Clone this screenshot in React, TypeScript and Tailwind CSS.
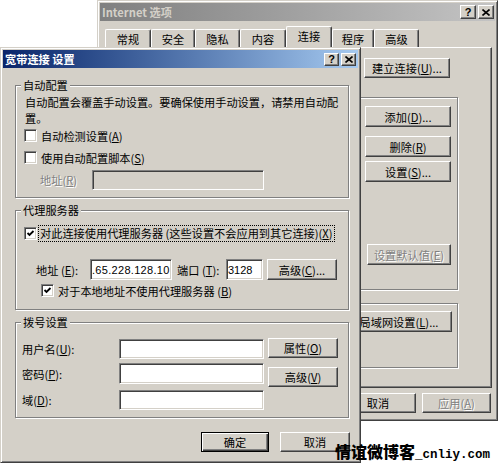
import React from "react";

const raised =
  "bg-[#d4d0c8] border border-t-white border-l-white border-r-[#404040] border-b-[#404040] shadow-[inset_-1px_-1px_#808080]";
const sunken =
  "bg-white border border-t-[#808080] border-l-[#808080] border-r-white border-b-white shadow-[inset_1px_1px_#404040,inset_-1px_-1px_#d4d0c8]";
const frame =
  "bg-[#d4d0c8] border border-t-[#d4d0c8] border-l-[#d4d0c8] border-r-[#404040] border-b-[#404040] shadow-[inset_1px_1px_white,inset_-1px_-1px_#808080]";
const disabledText = "text-[#808080] [text-shadow:1px_1px_0_white]";

function Btn({
  children,
  className = "",
  disabled = false,
}: {
  children: React.ReactNode;
  className?: string;
  disabled?: boolean;
}) {
  return (
    <div
      className={`${raised} flex shrink-0 items-center justify-center whitespace-nowrap leading-[12px] ${
        disabled ? disabledText : "text-black"
      } ${className}`}
    >
      {children}
    </div>
  );
}

function Check({ checked }: { checked?: boolean }) {
  return (
    <div className={`${sunken} relative h-[13px] w-[13px] shrink-0`}>
      {checked && (
        <svg className="absolute left-[1px] top-[1px]" width="9" height="9" viewBox="0 0 9 9">
          <path d="M1.5 4 L3.5 6 L7.5 2" stroke="black" strokeWidth="1.8" fill="none" />
        </svg>
      )}
    </div>
  );
}

function Group({
  label,
  className = "",
  children,
}: {
  label: string;
  className?: string;
  children?: React.ReactNode;
}) {
  return (
    <div
      className={`relative border border-[#808080] shadow-[inset_1px_1px_white,1px_1px_white] ${className}`}
    >
      {label && (
        <span className="absolute -top-[7px] left-[5px] bg-[#d4d0c8] px-[2px] leading-[12px] whitespace-nowrap">
          {label}
        </span>
      )}
      {children}
    </div>
  );
}

function TitleButtons({ w, h }: { w: string; h: string }) {
  return (
    <div className="flex items-center gap-[2px]">
      <div className={`${raised} ${w} ${h} flex items-center justify-center`}>
        <span className="font-['Liberation_Sans',sans-serif] text-[11px] font-bold leading-[11px] text-black">
          ?
        </span>
      </div>
      <div className={`${raised} ${w} ${h} flex items-center justify-center`}>
        <svg width="8" height="7" viewBox="0 0 8 7">
          <path d="M0.5 0.5 L7.5 6.5 M7.5 0.5 L0.5 6.5" stroke="black" strokeWidth="1.6" />
        </svg>
      </div>
    </div>
  );
}

function Acc({ pre, k, post = "" }: { pre: string; k: string; post?: string }) {
  return (
    <>
      {pre}(<u>{k}</u>){post}
    </>
  );
}

function BackWindow() {
  const tabs = [
    { t: "常规", w: "w-[46px]" },
    { t: "安全", w: "w-[44px]" },
    { t: "隐私", w: "w-[45px]" },
    { t: "内容", w: "w-[46px]" },
    { t: "连接", w: "w-[46px]", sel: true },
    { t: "程序", w: "w-[42px]" },
    { t: "高级", w: "w-[45px]" },
  ];
  return (
    <div className={`${frame} absolute left-[97px] top-0 flex h-[421px] w-[401px] flex-col p-[2px]`}>
      <div className="flex h-[18px] shrink-0 items-center justify-between bg-linear-to-r from-[#808080] to-[#c4c4c4] pl-[2px] pr-[1px]">
        <span className="font-bold leading-[12px] text-[#d4d0c8]">Internet 选项</span>
        <TitleButtons w="w-[16px]" h="h-[14px]" />
      </div>
      <div className="flex flex-1 flex-col pl-[3px] pr-[3px]">
        <div className="relative z-10 mt-[5px] flex h-[21px] items-end pl-[2px]">
          {tabs.map((t) => (
            <div
              key={t.t}
              className={`${t.w} flex items-center justify-center rounded-t-[2px] border-l border-r border-t border-l-white border-r-[#404040] border-t-white bg-[#d4d0c8] shadow-[inset_-1px_0_#808080] leading-[12px] ${
                t.sel ? "-mb-[1px] h-[22px] pb-[3px]" : "h-[18px] pt-[1px]"
              }`}
            >
              {t.t}
            </div>
          ))}
        </div>
        <div className={`${raised} flex h-[341px] flex-col items-end pr-[33px]`}>
          <Btn className="mr-[8px] mt-[10px] h-[20px] w-[86px]">
            <Acc pre="建立连接" k="U" post="..." />
          </Btn>
          <Group label="" className="mt-[19px] flex h-[193px] w-[346px] flex-col items-end pr-[6px] pt-[8px]">
            <Btn className="h-[21px] w-[86px]">
              <Acc pre="添加" k="D" post="..." />
            </Btn>
            <Btn className="mt-[9px] h-[21px] w-[86px]">
              <Acc pre="删除" k="R" />
            </Btn>
            <Btn className="mt-[4px] h-[21px] w-[86px]">
              <Acc pre="设置" k="S" post="..." />
            </Btn>
            <Btn disabled className="mt-[62px] h-[21px] w-[84px]">
              <Acc pre="设置默认值" k="E" />
            </Btn>
          </Group>
          <Group label="" className="mt-[13px] flex h-[65px] w-[346px] flex-col items-end pr-[5px] pt-[7px]">
            <Btn className="h-[21px] w-[106px]">
              <Acc pre="局域网设置" k="L" post="..." />
            </Btn>
          </Group>
        </div>
        <div className="mt-[5px] flex justify-end gap-[6px] pr-[1px]">
          <Btn className="h-[20px] w-[76px]">取消</Btn>
          <Btn disabled className="h-[20px] w-[69px]">
            <Acc pre="应用" k="A" />
          </Btn>
        </div>
      </div>
    </div>
  );
}

function Dialog() {
  return (
    <div className={`${frame} absolute left-0 top-[47px] z-20 flex h-[416px] w-[361px] flex-col p-[2px]`}>
      <div className="flex h-[18px] shrink-0 items-center justify-between bg-linear-to-r from-[#0a246a] to-[#a6caf0] pl-[2px] pr-[2px]">
        <span className="font-bold leading-[12px] text-white">宽带连接 设置</span>
        <TitleButtons w="w-[15px]" h="h-[13px]" />
      </div>
      <div className="flex flex-col pl-[12px]">
        {/* 自动配置 */}
        <Group label="自动配置" className="mt-[17px] w-[334px] pb-[7px] pl-[8px] pt-[8px]">
          <div className="ml-[1px] whitespace-nowrap leading-[16px]">
            <div>自动配置会覆盖手动设置。要确保使用手动设置，请禁用自动配</div>
            <div>置。</div>
          </div>
          <div className="mt-[3px] flex h-[13px] items-center gap-[4px]">
            <Check />
            <span className="leading-[12px]">
              <Acc pre="自动检测设置" k="A" />
            </span>
          </div>
          <div className="mt-[9px] flex h-[13px] items-center gap-[4px]">
            <Check />
            <span className="leading-[12px]">
              <Acc pre="使用自动配置脚本" k="S" />
            </span>
          </div>
          <div className="mt-[6px] flex h-[20px] items-center pl-[16px]">
            <span className={`w-[52px] leading-[12px] ${disabledText}`}>
              <Acc pre="地址" k="R" />
            </span>
            <div className="h-[20px] w-[172px] border border-b-white border-l-[#808080] border-r-white border-t-[#808080] bg-[#d4d0c8] shadow-[inset_1px_1px_#404040,inset_-1px_-1px_#d4d0c8]" />
          </div>
        </Group>

        {/* 代理服务器 */}
        <Group label="代理服务器" className="mt-[12px] w-[334px] pb-[12px] pl-[8px] pt-[14px]">
          <div className="flex h-[17px] items-center gap-[1px]">
            <Check checked />
            <span className="border border-dotted border-black px-[1px] leading-[15px] whitespace-nowrap">
              对此连接使用代理服务器 (这些设置不会应用到其它连接)(<u>X</u>)
            </span>
          </div>
          <div className="mt-[17px] flex h-[21px] items-center pl-[12px]">
            <span className="w-[54px] leading-[12px]">
              <Acc pre="地址 " k="E" post=":" />
            </span>
            <div className={`${sunken} flex h-[21px] w-[82px] items-center overflow-hidden pl-[1px] font-['Liberation_Sans',sans-serif] text-[11px] leading-[12px] tracking-[0.3px]`}>
              .65.228.128.10
            </div>
            <span className="ml-[5px] w-[49px] leading-[12px]">
              <Acc pre="端口 " k="T" post=":" />
            </span>
            <div className={`${sunken} flex h-[21px] w-[37px] items-center pl-[1px] font-['Liberation_Sans',sans-serif] text-[11px] leading-[12px]`}>
              3128
            </div>
            <Btn className="ml-[4px] h-[21px] w-[70px]">
              <Acc pre="高级" k="C" post="..." />
            </Btn>
          </div>
          <div className="mt-[4px] flex h-[13px] items-center gap-[4px] pl-[17px]">
            <Check checked />
            <span className="leading-[12px]">
              <Acc pre="对于本地地址不使用代理服务器 " k="B" />
            </span>
          </div>
        </Group>

        {/* 拨号设置 */}
        <Group label="拨号设置" className="mt-[12px] flex w-[334px] pb-[7px] pl-[6px] pt-[15px]">
          <div className="flex flex-col">
            <div className="mt-[1px] flex h-[20px] items-center">
              <span className="w-[97px] leading-[12px]">
                <Acc pre="用户名" k="U" post=":" />
              </span>
              <div className={`${sunken} h-[20px] w-[145px]`} />
            </div>
            <div className="mt-[4px] flex h-[21px] items-center">
              <span className="w-[97px] leading-[12px]">
                <Acc pre="密码" k="P" post=":" />
              </span>
              <div className={`${sunken} h-[21px] w-[145px]`} />
            </div>
            <div className="mt-[6px] flex h-[20px] items-center">
              <span className="w-[97px] leading-[12px]">
                <Acc pre="域" k="D" post=":" />
              </span>
              <div className={`${sunken} h-[20px] w-[145px]`} />
            </div>
          </div>
          <div className="ml-[4px] flex flex-col">
            <Btn className="h-[20px] w-[70px]">
              <Acc pre="属性" k="O" />
            </Btn>
            <Btn className="mt-[9px] h-[20px] w-[70px]">
              <Acc pre="高级" k="V" />
            </Btn>
          </div>
        </Group>

        <div className="mt-[14px] flex w-[335px] justify-end gap-[11px]">
          <div className="flex h-[20px] w-[68px] items-center justify-center border border-black bg-[#d4d0c8] leading-[12px] shadow-[inset_1px_1px_white,inset_-1px_-1px_#404040,inset_-2px_-2px_#808080]">
            确定
          </div>
          <Btn className="h-[20px] w-[70px]">取消</Btn>
        </div>
      </div>
    </div>
  );
}

export default function App() {
  return (
    <div className="relative h-[466px] w-[500px] overflow-hidden bg-white font-['Noto_Sans_CJK_SC','Noto_Sans',sans-serif] text-[11.2px] text-black">
      <BackWindow />
      <Dialog />
      <div className="absolute left-[335px] top-[441px] z-30 flex items-baseline whitespace-nowrap">
        <span className="font-['Noto_Sans_CJK_SC',sans-serif] text-[16px] font-black leading-[20px] text-black">
          情谊微博客
        </span>
        <span className="font-['Liberation_Mono',monospace] text-[12.5px] font-bold leading-[20px] text-black">
          _cnliy.com
        </span>
      </div>
    </div>
  );
}
